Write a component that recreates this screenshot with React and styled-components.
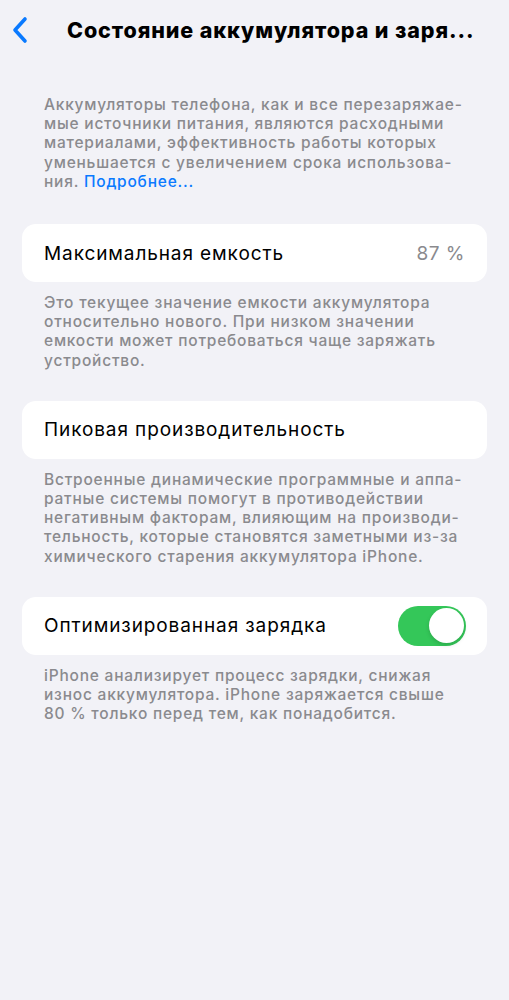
import React, { useState } from 'react'
import styled, { createGlobalStyle } from 'styled-components'

const GlobalStyle = createGlobalStyle`
  html, body {
    margin: 0;
    padding: 0;
    background: #f2f2f7;
  }
  body {
    font-family: Inter, "Noto Sans", "Liberation Sans", sans-serif;
    -webkit-font-smoothing: antialiased;
  }
`

const sections = [
  {
    id: 'capacity',
    label: 'Максимальная емкость',
    value: '87 %',
    note: [
      'Это текущее значение емкости аккумулятора',
      'относительно нового. При низком значении',
      'емкости может потребоваться чаще заряжать',
      'устройство.',
    ],
  },
  {
    id: 'peak',
    label: 'Пиковая производительность',
    note: [
      'Встроенные динамические программные и аппа-',
      'ратные системы помогут в противодействии',
      'негативным факторам, влияющим на производи-',
      'тельность, которые становятся заметными из-за',
      'химического старения аккумулятора iPhone.',
    ],
  },
  {
    id: 'optimized',
    label: 'Оптимизированная зарядка',
    toggle: true,
    note: [
      'iPhone анализирует процесс зарядки, снижая',
      'износ аккумулятора. iPhone заряжается свыше',
      '80 % только перед тем, как понадобится.',
    ],
  },
]

function App() {
  const [optimized, setOptimized] = useState(true)

  return (<>
    <GlobalStyle />
    <Screen>
      <NavBar>
        <BackButton aria-label="Назад">
          <svg width="18" height="28" viewBox="0 0 18 28" fill="none">
            <path d="M14 3 L4 14 L14 25" stroke="#0a7aff" strokeWidth="3.6" strokeLinecap="round" strokeLinejoin="round" />
          </svg>
        </BackButton>
        <Title>Состояние аккумулятора и заря...</Title>
      </NavBar>

      <Intro>
        Аккумуляторы телефона, как и все перезаряжае-<br />
        мые источники питания, являются расходными<br />
        материалами, эффективность работы которых<br />
        уменьшается с увеличением срока использова-<br />
        ния. <MoreLink href="#">Подробнее...</MoreLink>
      </Intro>

      {sections.map((s) => (
        <Section key={s.id}>
          <Card>
            <Label>{s.label}</Label>
            {s.value && <Value>{s.value}</Value>}
            {s.toggle && (
              <Switch $on={optimized} onClick={() => setOptimized(!optimized)}>
                <Knob $on={optimized} />
              </Switch>
            )}
          </Card>
          <Note>
            {s.note.map((line, i) => (
              <React.Fragment key={i}>{line}{i < s.note.length - 1 && <br />}</React.Fragment>
            ))}
          </Note>
        </Section>
      ))}
    </Screen>
  </>)
}

const Screen = styled.div`
  min-height: 1000px;
  background: #f2f2f7;
  display: flex;
  flex-direction: column;
`

const NavBar = styled.header`
  height: 60px;
  display: flex;
  align-items: center;
  padding-left: 11px;
  gap: 38px;
`

const BackButton = styled.button`
  border: none;
  background: none;
  padding: 0;
  display: flex;
  align-items: center;
  cursor: pointer;
`

const Title = styled.h1`
  margin: 0;
  font-size: 21.5px;
  font-weight: 800;
  color: #000;
  white-space: nowrap;
  letter-spacing: 0.9px;
`

const Intro = styled.p`
  margin: 35px 0 0;
  padding: 0 30px 0 44px;
  font-size: 15.5px;
  font-weight: 500;
  line-height: 19.2px;
  letter-spacing: 0.78px;
  color: #8a8a8e;
  white-space: nowrap;
`

const MoreLink = styled.a`
  color: #0a7aff;
  text-decoration: none;
`

const Section = styled.section`
  margin-top: 33px;
  &:not(:first-of-type) {
    margin-top: 31px;
  }
`

const Card = styled.div`
  margin: 0 22px;
  height: 58px;
  border-radius: 14px;
  background: #fff;
  display: flex;
  align-items: center;
  justify-content: space-between;
  padding: 0 22px 0 22px;
`

const Label = styled.span`
  font-size: 19px;
  letter-spacing: 0.9px;
  color: #000;
`

const Value = styled.span`
  font-size: 19px;
  letter-spacing: 0.5px;
  color: #8a8a8e;
`

const Switch = styled.button`
  position: relative;
  width: 68px;
  height: 40px;
  border: none;
  border-radius: 20px;
  padding: 0;
  margin-right: -1px;
  background: ${(p) => (p.$on ? '#34c759' : '#e9e9ea')};
  cursor: pointer;
`

const Knob = styled.span`
  position: absolute;
  top: 2.5px;
  left: ${(p) => (p.$on ? '30.5px' : '2.5px')};
  width: 35px;
  height: 35px;
  border-radius: 50%;
  background: #fff;
  box-shadow: 0 2px 4px rgba(0, 0, 0, 0.15);
`

const Note = styled.p`
  margin: 11px 0 0;
  padding: 0 30px 0 44px;
  font-size: 15.5px;
  font-weight: 500;
  line-height: 19.2px;
  letter-spacing: 0.78px;
  color: #8a8a8e;
  white-space: nowrap;
`

export default App
